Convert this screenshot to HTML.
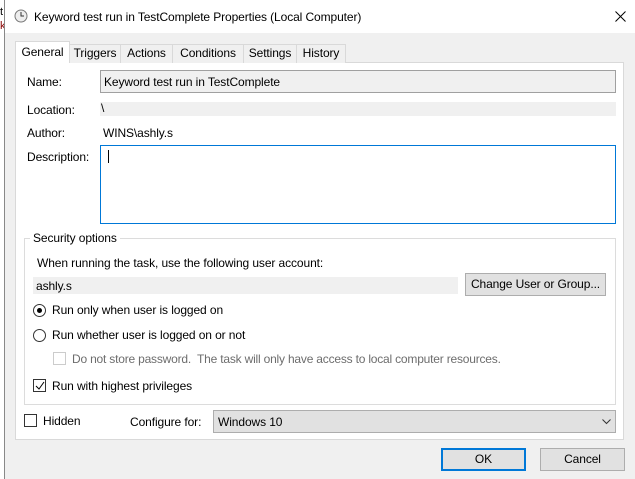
<!DOCTYPE html>
<html><head><style>
*{box-sizing:border-box;margin:0;padding:0}
body{width:635px;height:479px;overflow:hidden;background:#f0f0f0;font-family:"Liberation Sans",sans-serif;font-size:12px;color:#000;position:relative;letter-spacing:-0.1px}
.a{position:absolute;white-space:nowrap}
.t{line-height:14px}
.tab{position:absolute;top:44px;height:19px;border:1px solid #d9d9d9;border-bottom:none;background:#f0f0f0;text-align:center;line-height:17px}
.btn{position:absolute;background:#e1e1e1;border:1px solid #adadad;text-align:center}
.rad{position:absolute;width:13px;height:13px;border:1px solid #333;border-radius:50%;background:#fff}
.chk{position:absolute;width:13px;height:13px;border:1px solid #333;background:#fff}
</style></head><body>
<div class="a" style="left:0;top:0;width:4px;height:479px;background:#fff"></div>
<div class="a" style="left:0;top:6px;font-size:11px">t</div>
<div class="a" style="left:0;top:20px;font-size:11px;color:#800">k</div>
<div class="a" style="left:4px;top:0;width:1px;height:479px;background:#888"></div>
<div class="a" style="left:5px;top:0;width:630px;height:33px;background:#fff"></div>
<svg class="a" style="left:14px;top:9px" width="14" height="14" viewBox="0 0 14 14"><circle cx="7" cy="7" r="6" fill="#eee" stroke="#777"/><path d="M7 3v4h3" stroke="#333" fill="none"/></svg>
<div class="a t" style="left:34px;top:10px">Keyword test run in TestComplete Properties (Local Computer)</div>
<svg class="a" style="left:615px;top:11px" width="11" height="11"><path d="M0.5 0.5L10.5 10.5M10.5 0.5L0.5 10.5" stroke="#000"/></svg>

<div class="a" style="left:15px;top:62px;width:609px;height:378px;background:#fff;border:1px solid #d9d9d9"></div>
<div class="tab" style="left:69px;width:52px">Triggers</div>
<div class="tab" style="left:120px;width:53px">Actions</div>
<div class="tab" style="left:172px;width:72px">Conditions</div>
<div class="tab" style="left:243px;width:54px">Settings</div>
<div class="tab" style="left:296px;width:50px">History</div>
<div class="tab" style="left:15px;top:41px;width:55px;height:22px;background:#fff;line-height:21px">General</div>

<div class="a t" style="left:27px;top:75px">Name:</div>
<div class="a" style="left:100px;top:70px;width:516px;height:23px;background:#f0f0f0;border:1px solid #a0a0a0;padding:4px 0 0 3px">Keyword test run in TestComplete</div>
<div class="a t" style="left:27px;top:103px">Location:</div>
<div class="a" style="left:100px;top:102px;width:516px;height:14px;background:#f0f0f0"></div>
<div class="a t" style="left:101px;top:101px">\</div>
<div class="a t" style="left:27px;top:126px">Author:</div>
<div class="a t" style="left:103px;top:126px">WINS\ashly.s</div>
<div class="a t" style="left:27px;top:150px">Description:</div>
<div class="a" style="left:100px;top:145px;width:516px;height:79px;border:1px solid #0078d7;background:#fff"></div>
<div class="a" style="left:108px;top:150px;width:1px;height:13px;background:#000"></div>

<div class="a" style="left:24px;top:238px;width:592px;height:167px;border:1px solid #dcdcdc"></div>
<div class="a t" style="left:30px;top:231px;background:#fff;padding:0 3px">Security options</div>
<div class="a t" style="left:37px;top:256px">When running the task, use the following user account:</div>
<div class="a" style="left:33px;top:277px;width:425px;height:17px;background:#f0f0f0;padding:2px 0 0 3px">ashly.s</div>
<div class="btn" style="left:465px;top:273px;width:141px;height:23px;line-height:21px">Change User or Group...</div>
<div class="rad" style="left:33px;top:304px"></div><div class="a" style="left:37px;top:308px;width:5px;height:5px;border-radius:50%;background:#000"></div>
<div class="a t" style="left:52px;top:303px">Run only when user is logged on</div>
<div class="rad" style="left:33px;top:329px"></div>
<div class="a t" style="left:52px;top:328px">Run whether user is logged on or not</div>
<div class="chk" style="left:53px;top:352px;border-color:#ccc"></div>
<div class="a t" style="left:72px;top:352px;color:#6d6d6d;letter-spacing:-0.2px">Do not store password.&nbsp; The task will only have access to local computer resources.</div>
<div class="chk" style="left:33px;top:379px"></div>
<svg class="a" style="left:35px;top:381px" width="10" height="10"><path d="M1 5l3 3 5-7" stroke="#000" fill="none"/></svg>
<div class="a t" style="left:52px;top:379px">Run with highest privileges</div>

<div class="chk" style="left:24px;top:414px"></div>
<div class="a t" style="left:43px;top:414px">Hidden</div>
<div class="a t" style="left:130px;top:415px">Configure for:</div>
<div class="a" style="left:213px;top:410px;width:403px;height:23px;background:#e1e1e1;border:1px solid #adadad;padding:4px 0 0 4px">Windows 10</div>
<svg class="a" style="left:602px;top:419px" width="9" height="6"><path d="M0.5 0.5l4 4 4-4" stroke="#333" fill="none"/></svg>

<div class="btn" style="left:441px;top:448px;width:85px;height:23px;border:2px solid #0078d7;line-height:19px">OK</div>
<div class="btn" style="left:540px;top:448px;width:85px;height:23px;line-height:21px">Cancel</div>
</body></html>
